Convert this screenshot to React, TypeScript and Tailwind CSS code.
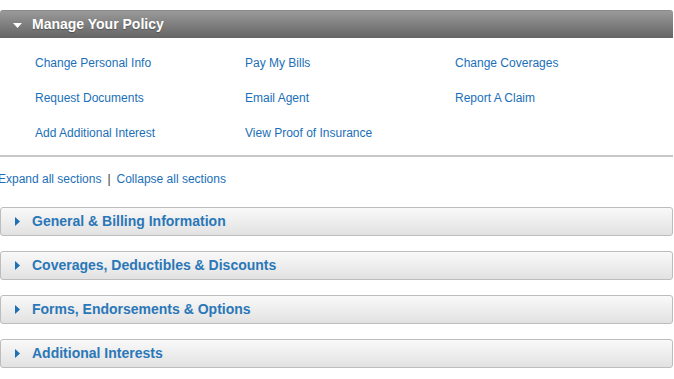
import React from "react";

const links = [
  ["Change Personal Info", "Pay My Bills", "Change Coverages"],
  ["Request Documents", "Email Agent", "Report A Claim"],
  ["Add Additional Interest", "View Proof of Insurance", ""],
];

const sections = [
  "General & Billing Information",
  "Coverages, Deductibles & Discounts",
  "Forms, Endorsements & Options",
  "Additional Interests",
];

export default function App() {
  return (
    <div
      className="w-[674px] h-[379px] bg-white overflow-hidden"
      style={{ fontFamily: '"Liberation Sans", Arial, sans-serif' }}
    >
      <div className="pt-[10px] w-[673px]">
        <div className="h-[28px] rounded-t-[3px] bg-gradient-to-b from-[#9a9a9a] to-[#656565] flex items-center border-t border-[#8a8a8a]">
          <svg width="9" height="5" viewBox="0 0 9 5" className="ml-[13px] mt-[1px]">
            <polygon points="0,0 9,0 4.5,5" fill="#ffffff" />
          </svg>
          <span className="ml-[10px] text-white font-bold text-[14px] [text-shadow:0_1px_1px_rgba(0,0,0,0.3)]">
            Manage Your Policy
          </span>
        </div>
        <div className="border-b-2 border-[#c8c8c8] pt-[17px] pb-[14px] flex flex-col gap-[19px]">
          {links.map((row, i) => (
            <div key={i} className="flex h-[16px] items-start pl-[35px]">
              {row.map((l, j) => (
                <span key={j} className="w-[210px] text-[12px] leading-[16px] text-[#1a6fb8]">
                  {l}
                </span>
              ))}
            </div>
          ))}
        </div>
      </div>
      <div className="mt-[14px] ml-[-2px] text-[12px] leading-[16px] text-[#1a6fb8] flex items-center">
        <span>Expand all sections</span>
        <span className="mx-[6px] text-[#333]">|</span>
        <span>Collapse all sections</span>
      </div>
      <div className="mt-[20px] flex flex-col gap-[15px] w-[673px]">
        {sections.map((s) => (
          <div
            key={s}
            className="h-[29px] rounded-[3px] border border-[#bdbdbd] bg-gradient-to-b from-[#f9f9f9] to-[#e2e2e2] flex items-center"
          >
            <svg width="5" height="9" viewBox="0 0 5 9" className="ml-[14px]">
              <polygon points="0,0 5,4.5 0,9" fill="#1f6fb3" />
            </svg>
            <span className="ml-[12px] text-[14px] font-bold text-[#2a77b8]">{s}</span>
          </div>
        ))}
      </div>
    </div>
  );
}
